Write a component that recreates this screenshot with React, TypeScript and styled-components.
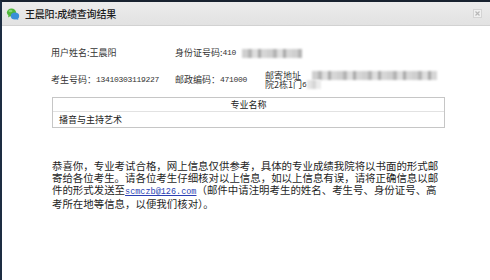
import styled, { createGlobalStyle } from "styled-components";

const GlobalStyle = createGlobalStyle`
  html, body {
    margin: 0;
    padding: 0;
    background: #ffffff;
  }
  body {
    font-family: "Noto Sans CJK SC", "Liberation Sans", sans-serif;
  }
`;

const Window = styled.div`
  width: 490px;
  height: 280px;
  box-sizing: border-box;
  border-top: 2px solid #18222f;
  border-left: 2px solid #1d2d42;
  background: #ffffff;
  display: flex;
  flex-direction: column;
  overflow: hidden;
`;

const TitleBar = styled.div`
  height: 23px;
  flex-shrink: 0;
  display: flex;
  align-items: center;
  padding: 0 8px 0 4px;
  background: linear-gradient(#ececec, #e2e2e2);
  border-bottom: 1px solid #d2d2d2;
`;

const Title = styled.span`
  margin-left: 5px;
  font-size: 10px;
  color: #1a1a1a;
  font-weight: 500;
  letter-spacing: -0.2px;
`;

const CloseButton = styled.div`
  margin-left: auto;
  width: 9px;
  height: 9px;
  display: flex;
  align-items: center;
  justify-content: center;
`;

const Content = styled.div`
  padding: 21px 0 0 49px;
  color: #333;
`;

const InfoRow = styled.div<{ $height: number; $gap: number }>`
  display: flex;
  align-items: center;
  height: ${(p) => p.$height}px;
  margin-bottom: ${(p) => p.$gap}px;
  font-size: 9px;
  line-height: 12px;
  white-space: nowrap;
`;

const Cell = styled.div<{ $width?: number }>`
  width: ${(p) => (p.$width ? `${p.$width}px` : "auto")};
  flex-shrink: 0;
  display: flex;
  align-items: center;
`;

const Num = styled.span`
  font-family: "Liberation Mono", monospace;
  font-size: 8px;
  letter-spacing: -0.3px;
`;

const Address = styled.div`
  display: flex;
  flex-direction: column;
  line-height: 9.5px;
`;

const AddressLine = styled.div`
  display: flex;
  align-items: center;
`;

const Mosaic = styled.span<{ $width: number; $light?: boolean }>`
  display: inline-block;
  width: ${(p) => p.$width}px;
  height: 9px;
  filter: blur(0.8px);
  background: ${(p) =>
    p.$light
      ? "repeating-linear-gradient(90deg, #e4e4e4 0 5px, #d6d6d6 5px 9px, #ececec 9px 14px)"
      : "repeating-linear-gradient(90deg, #cfcfcf 0 6px, #b4b4b4 6px 10px, #dedede 10px 16px, #a9a9a9 16px 19px, #d6d6d6 19px 25px)"};
`;

const Table = styled.div`
  width: 391px;
  margin: 0 0 0 1px;
  border: 1px solid #c6c6c6;
  font-size: 9px;
  color: #222;
`;

const HeaderCell = styled.div`
  height: 13px;
  line-height: 13px;
  text-align: center;
  border-bottom: 1px solid #e2e2e2;
`;

const BodyCell = styled.div`
  height: 15px;
  line-height: 15px;
  padding-left: 6px;
`;

const Notice = styled.div`
  margin: 32px 0 0 1px;
  font-size: 10.45px;
  line-height: 12px;
  color: #1e1e1e;
  white-space: nowrap;
`;

const Mail = styled.a`
  font-family: "Liberation Mono", monospace;
  font-size: 8.5px;
  color: #2a3fb4;
  text-decoration: underline;
`;

function ChatIcon() {
  return (
    <svg width="14" height="14" viewBox="0 0 14 14">
      <ellipse cx="5.5" cy="5.5" rx="4.6" ry="4" fill="#4fb83a" />
      <path d="M2.5 8.5 L2 10.5 L4.5 9" fill="#4fb83a" />
      <ellipse cx="9" cy="9" rx="4.2" ry="3.6" fill="#3a8fd8" />
      <path d="M11.5 11.5 L12.5 13 L10 12" fill="#3a8fd8" />
      <ellipse cx="4.5" cy="4" rx="2" ry="1.2" fill="#9be08a" opacity="0.7" />
    </svg>
  );
}

function CloseIcon() {
  return (
    <svg width="9" height="9" viewBox="0 0 9 9">
      <rect x="0.5" y="0.5" width="8" height="8" fill="#f0f0f0" stroke="#d4d4d4" />
      <path d="M2.5 2.5 L6.5 6.5 M6.5 2.5 L2.5 6.5" stroke="#b8b8b8" strokeWidth="1.2" />
    </svg>
  );
}

export default function App() {
  return (
    <>
      <GlobalStyle />
      <Window>
        <TitleBar>
          <ChatIcon />
          <Title>王晨阳:成绩查询结果</Title>
          <CloseButton>
            <CloseIcon />
          </CloseButton>
        </TitleBar>
        <Content>
          <InfoRow $height={12} $gap={11}>
            <Cell $width={124}>用户姓名:王晨阳</Cell>
            <Cell>
              身份证号码:<Num>410</Num>
              <Mosaic $width={60} style={{ marginLeft: 6 }} />
            </Cell>
          </InfoRow>
          <InfoRow $height={20} $gap={7}>
            <Cell $width={124}>
              考生号码：<Num>13410303119227</Num>
            </Cell>
            <Cell $width={90}>
              邮政编码：<Num>471000</Num>
            </Cell>
            <Address>
              <AddressLine>
                邮寄地址
                <Mosaic $width={125} style={{ marginLeft: 11 }} />
              </AddressLine>
              <AddressLine>
                院2栋1门<Num>6</Num>
                <Mosaic $width={14} $light />
              </AddressLine>
            </Address>
          </InfoRow>
          <Table>
            <HeaderCell>专业名称</HeaderCell>
            <BodyCell>播音与主持艺术</BodyCell>
          </Table>
          <Notice>
            恭喜你，专业考试合格，网上信息仅供参考，具体的专业成绩我院将以书面的形式邮
            <br />
            寄给各位考生。请各位考生仔细核对以上信息，如以上信息有误，请将正确信息以邮
            <br />
            件的形式发送至<Mail href="mailto:scmczb@126.com">scmczb@126.com</Mail>（邮件中请注明考生的姓名、考生号、身份证号、高
            <br />
            考所在地等信息，以便我们核对）。
          </Notice>
        </Content>
      </Window>
    </>
  );
}
